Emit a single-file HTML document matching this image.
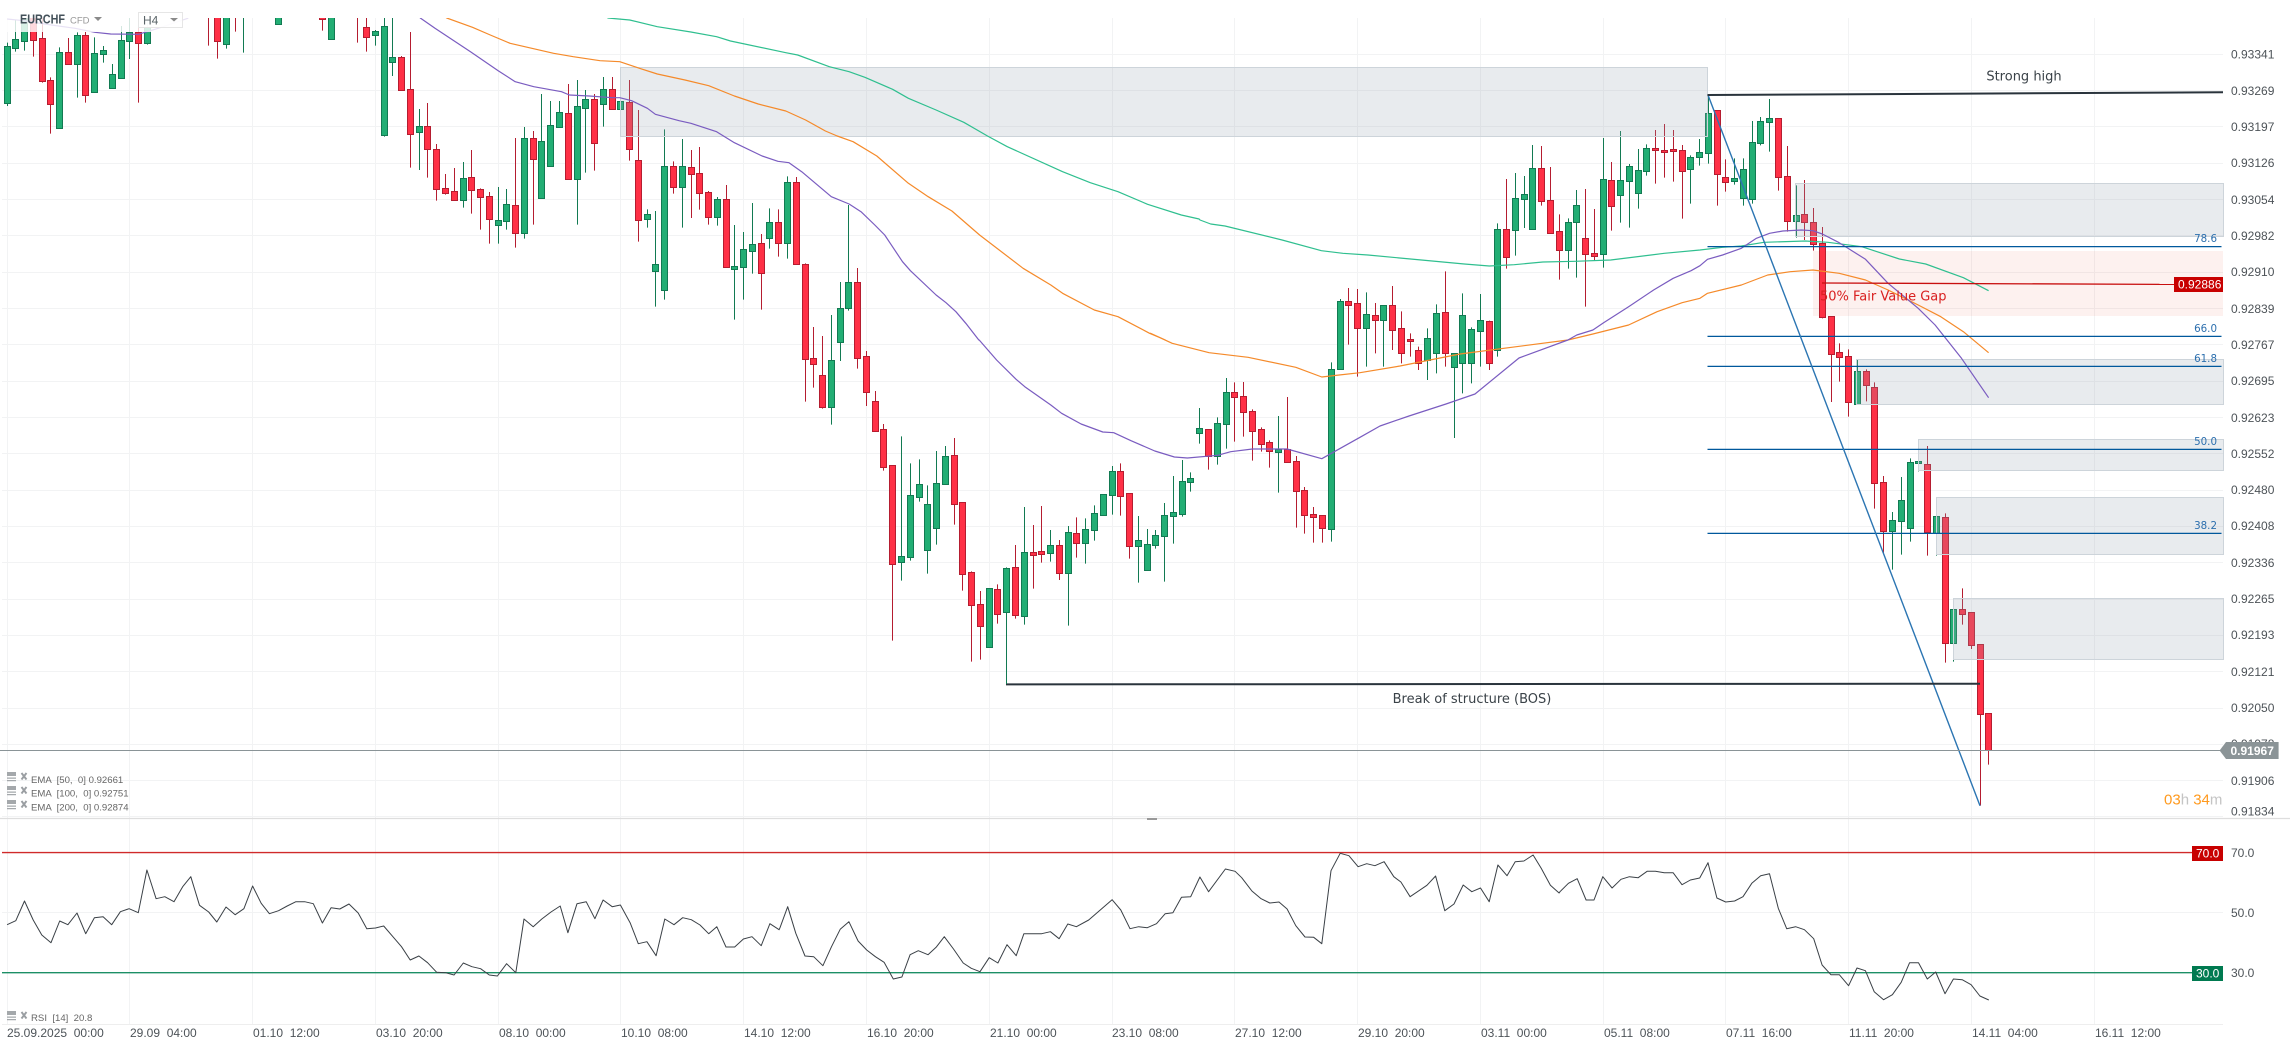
<!DOCTYPE html>
<html><head><meta charset="utf-8"><title>EURCHF</title>
<style>
html,body{margin:0;padding:0;background:#fff;width:2290px;height:1049px;overflow:hidden}
svg{display:block}
text{font-family:"Liberation Sans",sans-serif;white-space:pre}
.ax text{font-size:12px;fill:#4d5358}
.dj{font-family:"DejaVu Sans",sans-serif}
.lg text{font-size:9.6px;fill:#666}
</style></head><body>
<svg xmlns="http://www.w3.org/2000/svg" width="2290" height="1049" viewBox="0 0 2290 1049">
<defs>
<clipPath id="cp"><rect x="0" y="18" width="2223" height="800"/></clipPath>
<g id="ic"><path d="M7 0h9v4H7zM7 5.5h9v1.2H7zM7 8h9v1.2H7z" fill="#a4a8ab"/><path d="M21.5 1l5 6.5M26.5 1l-5 6.5" stroke="#9a9ea2" stroke-width="1.9" fill="none"/></g>
</defs>
<!-- grid -->
<path fill="none" stroke="#f2f3f4" stroke-width="1" d="M7.5 18V1024M129.5 18V1024M252.5 18V1024M375.5 18V1024M498.5 18V1024M620.5 18V1024M743.5 18V1024M866.5 18V1024M989.5 18V1024M1112.5 18V1024M1234.5 18V1024M1357.5 18V1024M1480.5 18V1024M1603.5 18V1024M1725.5 18V1024M1848.5 18V1024M1971.5 18V1024M2094.5 18V1024
M2 54.5H2223M2 90.5H2223M2 126.5H2223M2 163.5H2223M2 199.5H2223M2 235.5H2223M2 272.5H2223M2 308.5H2223M2 344.5H2223M2 381.5H2223M2 417.5H2223M2 453.5H2223M2 490.5H2223M2 526.5H2223M2 562.5H2223M2 599.5H2223M2 635.5H2223M2 671.5H2223M2 708.5H2223M2 744.5H2223M2 780.5H2223M2 816.5H2223M2 912.5H2223"/>
<g id="c" clip-path="url(#cp)"></g>
<!-- zones -->
<g fill="#96a4b1" fill-opacity=".22" stroke="#cdd4da" stroke-width="1">
<rect x="620.5" y="67.5" width="1087" height="69"/>
<rect x="1795.5" y="183.5" width="428" height="53"/>
<rect x="1856.5" y="359.5" width="367" height="45"/>
<rect x="1918.5" y="439.5" width="305" height="31"/>
<rect x="1936.5" y="497.5" width="287" height="57"/>
<rect x="1953.5" y="598.5" width="270" height="61"/>
</g>
<rect x="1813" y="251" width="410" height="65" fill="#e8402a" fill-opacity=".075"/>
<g id="l" clip-path="url(#cp)" fill="none"></g>
<!-- fib -->
<g stroke="#00589c" stroke-width="1.3" fill="none">
<path d="M1707.5 246.6H2221.5M1707.5 336.4H2221.5M1707.5 366.4H2221.5M1707.5 449.4H2221.5M1707.5 533.4H2221.5"/>
</g>
<path d="M1708 95L1980 805.7" stroke="#2b75b2" stroke-width="1.4" fill="none"/>
<g class="dj" font-size="10.3" fill="#2c6fae" text-anchor="end">
<text x="2217" y="242" class="dj">78.6</text>
<text x="2217" y="332" class="dj">66.0</text>
<text x="2217" y="362" class="dj">61.8</text>
<text x="2217" y="445" class="dj">50.0</text>
<text x="2217" y="529" class="dj">38.2</text>
</g>
<!-- structure lines -->
<path d="M1707.5 95L2223 92.3" stroke="#2a343c" stroke-width="2" fill="none"/>
<path d="M1006 684.4L1980 683.7" stroke="#2a343c" stroke-width="2" fill="none"/>
<path d="M1006.5 640V684" stroke="#127a52" stroke-width="1" fill="none"/>
<text x="2024" y="80.5" class="dj" font-size="13" fill="#3a4248" text-anchor="middle">Strong high</text>
<text x="1472" y="703" class="dj" font-size="13" fill="#3a4248" text-anchor="middle">Break of structure (BOS)</text>
<path d="M1822 283L2174 284.4" stroke="#c80f0f" stroke-width="1.3" fill="none"/>
<text x="1820" y="300.5" class="dj" font-size="13" fill="#d92020">50% Fair Value Gap</text>
<rect x="2174" y="277" width="49" height="15" fill="#c80000"/>
<text x="2178" y="288.5" font-size="12" fill="#fff">0.92886</text>
<!-- current price -->
<path d="M0 750.5H2220" stroke="#8a9497" stroke-width="1" fill="none"/>
<g class="ax">
<text x="2231" y="58.5">0.93341</text>
<text x="2231" y="95">0.93269</text>
<text x="2231" y="131">0.93197</text>
<text x="2231" y="167">0.93126</text>
<text x="2231" y="204">0.93054</text>
<text x="2231" y="240">0.92982</text>
<text x="2231" y="276">0.92910</text>
<text x="2231" y="313">0.92839</text>
<text x="2231" y="349">0.92767</text>
<text x="2231" y="385">0.92695</text>
<text x="2231" y="422">0.92623</text>
<text x="2231" y="458">0.92552</text>
<text x="2231" y="494">0.92480</text>
<text x="2231" y="530">0.92408</text>
<text x="2231" y="567">0.92336</text>
<text x="2231" y="603">0.92265</text>
<text x="2231" y="639">0.92193</text>
<text x="2231" y="676">0.92121</text>
<text x="2231" y="712">0.92050</text>
<text x="2231" y="748">0.91978</text>
<text x="2231" y="785">0.91906</text>
<text x="2231" y="815.5">0.91834</text>
</g>
<path d="M2219.6 750.5L2226 742H2278.6V759H2226Z" fill="#8b9497"/>
<text x="2230.5" y="755" font-size="12" fill="#fff" font-weight="bold">0.91967</text>
<text x="2164" y="804.5" font-size="15" fill="#ff9a1f">03<tspan fill="#c4c4c4">h</tspan> 34<tspan fill="#c4c4c4">m</tspan></text>
<!-- separator -->
<path d="M0 818.5H2290" stroke="#dedede" stroke-width="1.2" fill="none"/>
<rect x="1147" y="818" width="10" height="2" fill="#999"/>
<!-- RSI -->
<path d="M2 852.6H2192" stroke="#d02a2a" stroke-width="1.4" fill="none"/>
<path d="M2 972.7H2192" stroke="#1d8f66" stroke-width="1.4" fill="none"/>
<g id="r" fill="none"></g>
<rect x="2192" y="846" width="31" height="15" fill="#c80000"/>
<text x="2196" y="857.5" font-size="12" fill="#fff">70.0</text>
<rect x="2192" y="966" width="31" height="15" fill="#007a50"/>
<text x="2196" y="977.5" font-size="12" fill="#fff">30.0</text>
<g class="ax">
<text x="2231" y="857">70.0</text>
<text x="2231" y="917">50.0</text>
<text x="2231" y="977">30.0</text>
</g>
<path d="M2 1024.5H2223" stroke="#eeeeee" stroke-width="1" fill="none"/>
<g class="ax">
<text x="7" y="1037">25.09.2025  00:00</text>
<text x="130" y="1037">29.09  04:00</text>
<text x="253" y="1037">01.10  12:00</text>
<text x="376" y="1037">03.10  20:00</text>
<text x="499" y="1037">08.10  00:00</text>
<text x="621" y="1037">10.10  08:00</text>
<text x="744" y="1037">14.10  12:00</text>
<text x="867" y="1037">16.10  20:00</text>
<text x="990" y="1037">21.10  00:00</text>
<text x="1112" y="1037">23.10  08:00</text>
<text x="1235" y="1037">27.10  12:00</text>
<text x="1358" y="1037">29.10  20:00</text>
<text x="1481" y="1037">03.11  00:00</text>
<text x="1604" y="1037">05.11  08:00</text>
<text x="1726" y="1037">07.11  16:00</text>
<text x="1849" y="1037">11.11  20:00</text>
<text x="1972" y="1037">14.11  04:00</text>
<text x="2095" y="1037">16.11  12:00</text>
</g>
<!-- legends -->
<g class="lg">
<use href="#ic" y="772"/><text x="31" y="783">EMA  [50,  0] 0.92661</text>
<use href="#ic" y="786"/><text x="31" y="796.5">EMA  [100,  0] 0.92751</text>
<use href="#ic" y="800"/><text x="31" y="810.5">EMA  [200,  0] 0.92874</text>
<use href="#ic" y="1011"/><text x="31" y="1021">RSI  [14]  20.8</text>
</g>
<!-- header -->
<rect x="0" y="18" width="190" height="14" fill="#fff" fill-opacity=".82"/>
<text x="20" y="23.5" font-size="13" font-weight="bold" fill="#435059" textLength="45" lengthAdjust="spacingAndGlyphs">EURCHF</text>
<text x="70" y="23.5" font-size="9.5" fill="#9a9a9a">CFD</text>
<path d="M94 17H102L98 21Z" fill="#8a8a8a"/>
<rect x="138.5" y="12.5" width="44" height="15" fill="#fff" fill-opacity=".85" stroke="#e6e6e6"/>
<text x="143" y="24.5" font-size="12" fill="#5a6468">H4</text>
<path d="M170 18H178L174 21.5Z" fill="#8a8a8a"/>
<script>
(function(){
var NS="http://www.w3.org/2000/svg",cG=document.getElementById("c"),lG=document.getElementById("l"),rG=document.getElementById("r");
function el(p,n,a){var e=document.createElementNS(NS,n);for(var k in a)e.setAttribute(k,a[k]);p.appendChild(e);return e}
var C=[
[0,0,2.529,"g18 128 139 308 318,g39 60 118 143 155,g62 40 40 124 152,r84 40 40 119 170,r107 40 115 243 248,r128 232 241 313 401,g150 142 157 385 385,r173 114 157 193 193,g196 97 106 193 293,r216 96 106 286 308,g239 112 160 277 277,g262 138 151 163 188,g285 192 223 265 266,g307 78 121 235 236,g328 40 96 124 177,r350 40 96 130 308,g373 40 82 130 134,r527 40 40 40 137,r550 40 40 124 176,g572 40 40 133 146,r595 40 40 40 95,g616 40 40 40 158,g704 40 40 73 73,r815 40 40 58 92,g838 40 40 116 116,r904 40 40 40 128,r927 40 82 110 155,g950 90 94 106 137,g972 40 79 406 410,g992 40 172 187 228,r1015 168 172 269 272,r1038 96 268 403 503,g1060 327 379 397 510,r1081 309 379 448 533,r1104 432 448 566 602,r1127 522 565 578 584,r1149 504 574 599 599,g1171 486 535 599 623,r1192 450 532 571 641,r1215 565 568 592 689,r1238 576 589 658 731,g1260 561 661 674 731,g1281 567 613 664 689,r1304 414 616 700 743,g1326 381 415 700 716,r1349 393 415 478 674,g1369 282 424 593 593,g1392 303 376 499 499,g1415 303 337 380 383,r1438 252 340 536 539,g1460 240 319 536 674,g1481 270 298 325 518,r1503 282 298 430 512,g1526 231 268 313 380,r1549 231 268 328 328"],
[600,0,2.529,"g52 304 304 328 328,r74 240 307 448 482,r97 330 481 661 725,g120 628 643 658 683,g141 633 793 814 920,g163 388 499 871 899,r186 484 499 562 581,g208 417 499 562 683,r231 450 502 523 654,r251 441 520 580 629,r274 573 577 652 674,g297 591 598 652 677,r319 555 598 802 802,g340 675 799 806 959,g363 696 748 802 899,g385 609 733 754 821,r408 702 730 820 929,g429 625 667 715 746,r451 628 667 730 770,g474 529 547 730 776,r497 531 547 793 793,g629 615 847 925 932"],
[680,320,2.306,"r289 -170 -167 118 245,r308 21 115 131 203,r328 48 166 260 266,g349 -15 121 260 314,g369 -114 -35 65 123,r409 -156 -113 113 146,r430 93 109 215 258,r451 213 244 332 335,r469 312 328 442 452,r490 436 436 733 962,g511 349 709 727 782,g531 430 526 712 722,g552 418 493 532 545,g571 496 553 691 761,g591 393 490 625 674,g612 378 409 493 493,r633 354 406 553 614,r651 547 547 763 812,r672 754 757 856 1025,r693 813 853 919 1019,g713 805 805 982 982,r732 793 808 883 911,g753 742 745 877 1092,r773 675 742 886 896,g794 561 697 889 914,r815 615 697 704 806,r833 558 694 703 728,g854 630 676 700 725,r875 660 676 760 780,g896 618 637 760 917,r914 592 640 670 713,g935 595 628 670 731,g956 556 580 631 662,g976 523 523 584 588,g997 438 454 526 584,r1016 430 454 529 587,r1037 520 520 679 716,g1057 588 661 679 788,g1078 627 673 751 752,g1097 630 646 676 686,g1117 549 586 649 785,g1138 468 577 589 671,g1159 420 484 583 590,g1177 457 475 487 515,g1198 264 325 340 371,r1219 328 328 409 449,g1239 292 310 408 434,g1260 174 217 313 386,r1278 187 217 232 365,r1299 186 229 277 350,r1320 268 274 334 422,r1341 322 328 373 395,r1359 361 367 394 443,g1380 288 388 397 518,r1401 231 388 427 427,r1422 408 424 514 623,r1440 501 511 586 641,r1461 561 583 590 668,r1481 586 586 625 668,g1502 127 146 628 665"],
[1200,0,2.8,"g393 897 904 1108 1108,r415 864 904 916 1034,r441 867 910 985 1130,g466 877 943 985 1100,r491 909 946 961 1060,g514 916 916 961 1100,r539 858 916 991 1050,r564 934 985 1060 1090,r589 1000 1018 1022 1070,r612 1040 1050 1090 1110,g637 985 1015 1080 1140,g662 913 940 1060 1120,r687 814 937 1060 1100,g712 1060 1060 1100 1314,g735 880 946 1090 1180,g760 982 988 1090 1150,g785 882 961 994 1100,r810 962 964 1090 1110,g833 670 688 1050 1070,r858 537 688 770 806,g884 519 595 691 767,g908 528 583 598 684,g931 435 505 686 686,r956 438 505 604 617,r981 501 601 700 700,r1006 643 694 751 839,g1032 655 667 751 806,g1054 570 616 667 833,r1080 567 715 763 920,r1104 627 760 767 782,g1129 414 538 763 803,r1152 486 541 619 692,g1177 393 541 586 668,g1202 492 499 544 683,g1227 447 511 580 626,g1250 433 445 514 527,r1275 390 445 451 551,r1300 372 451 457 533,r1325 390 448 454 545,r1351 435 451 514 656,g1373 466 472 508 611,g1398 417 457 472 497,g1423 283 340 460 491,r1449 330 331 523 617,r1471 478 532 547 575,g1496 475 535 544 554,g1521 475 508 595 617,g1547 363 427 598 611"],
[1700,60,2.658,"g160 171 184 250 256,g184 117 175 187 275,r208 175 175 352 392,r232 258 349 484 515,g256 376 466 484 533,r277 360 463 487 540,r301 444 487 553 572,r325 501 550 772 775,r349 769 769 883 1026,r370 850 877 892 965,r394 868 889 1027 1070,g418 900 934 1033 1033,r442 928 934 976 1024,r463 967 982 1270 1346"],
[1700,440,2.658,"r487 108 127 272 343,g511 216 241 272 389,g535 111 181 244 344,g559 55 67 265 305,g580 64 64 70 94,r604 18 73 277 347,g628 172 229 278 347,r652 220 232 610 668,g673 508 508 610 665,r697 445 508 523 554,r721 517 517 616 627,r745 613 613 823 1097,r766 820 820 930 974"]
];
var col={g:["#22ae74","#127a52"],r:["#ff3046","#b51d30"]};
C.forEach(function(s){s[3].split(",").forEach(function(t){
 var c=t[0],v=t.slice(1).split(" ").map(Number);
 var X=Math.floor(s[0]+v[0]/s[2])+.5,f=function(y){return s[1]+y/3};
 var wt=f(v[1]),bt=f(v[2]),bb=f(v[3]),wb=f(v[4]);
 el(cG,"line",{x1:X,x2:X,y1:wt,y2:wb,stroke:col[c][1],"stroke-width":1});
 if(bb>bt){var y=Math.round(bt)+.5,h=Math.max(1,Math.round(bb)-Math.round(bt));
 el(cG,"rect",{x:X-3,y:y,width:6,height:h,fill:col[c][0],stroke:col[c][1],"stroke-width":1});}
})});
function pts(segs){var o=[];segs.forEach(function(s){s[3].trim().split(/\s+/).forEach(function(p){var a=p.split(",");o.push((s[0]+a[0]/s[2]).toFixed(1)+","+(s[1]+a[1]/3).toFixed(1))})});return o.join(" ")}
var P=[[0,0,2.529,"18,57 60,62 130,75 190,85 240,97 280,102 350,103 400,85 475,55 480,30 1050,30 1063,54 1100,85 1190,155 1260,212 1303,245 1350,260 1420,275 1440,285 1490,288 1549,293"],
[600,0,2.529,"50,293 80,302 120,325 140,343 200,362 230,370 295,395 340,428 410,468 450,484 478,488 510,515 585,590 630,612 660,635 695,675 720,705 765,785 785,812 850,885 875,908 900,935 925,970 958,1020"],
[680,320,2.306,"690,60 730,120 775,178 795,200 855,255 880,280 925,312 975,336 1000,338 1040,362 1095,393 1140,411 1170,414 1240,406 1270,395 1320,387 1400,387 1480,416 1568,352"],
[0,0,1,"1380,1278 1409,1248 1446,1212 1475,1182 1519,1074"],
[1200,0,2.8,"1030,1020 1055,1005 1100,990 1130,968 1200,920 1270,870 1325,835 1375,812"],
[1700,60,2.658,"0,617 20,598 60,585 110,565 150,535 185,520 220,513 270,510 300,512 325,522 370,548 440,598 500,670 580,745 625,795 695,895 767,1013"]];
var O=[[0,0,2.529,"1100,30 1130,54 1195,82 1240,105 1290,130 1400,160 1450,170"],
[600,0,2.529,"0,182 50,185 100,205 145,222 215,240 275,257 340,288 400,312 470,333 520,360 570,393 600,408 640,425 700,468 780,550 830,590 890,633 960,705 1070,805 1140,855 1170,880 1250,930 1310,950 1390,1000 1430,1020"],
[680,320,2.306,"1085,40 1135,70 1220,98 1310,112 1420,142 1480,171 1520,165 1568,158"],
[0,0,1,"1400,1098 1460,1062"],
[1200,0,2.8,"1030,1020 1100,1002 1200,975 1280,935 1350,908"],
[1700,60,2.658,"0,715 20,700 110,675 180,645 240,635 300,630 370,640 440,660 500,690 580,735 640,770 700,815 767,878"]];
var G=[[600,0,2.529,"0,30 20,54 75,60 145,80 230,96 295,110 330,123 470,158 500,165 580,200 630,215 670,232 740,268 780,295 850,330 920,367 980,408 1030,440 1170,515 1240,548 1310,575 1385,613 1470,645 1515,657"],
[1200,0,2.8,"0,660 30,672 70,678 230,720 340,752 400,760 470,765 620,780 740,792 810,798 880,794 960,786 1050,784 1150,780 1300,760"],
[1700,60,2.658,"0,570 60,562 110,558 170,547 280,543 340,547 430,560 530,597 600,612 700,653 767,692"]];
el(lG,"polyline",{points:pts(G),stroke:"#2fbf8f","stroke-width":1.2,"stroke-linejoin":"round"});
el(lG,"polyline",{points:pts(O),stroke:"#f58a2a","stroke-width":1.2,"stroke-linejoin":"round"});
el(lG,"polyline",{points:pts(P),stroke:"#7a5cc0","stroke-width":1.2,"stroke-linejoin":"round"});
var R=[[0,760,1.96,"14,494 31,482 48,423 65,480 82,525 100,548 117,483 133,494 151,459 168,521 185,473 202,470 219,494 236,455 253,446 271,458 288,330 306,416 323,410 341,425 358,380 374,350 391,436 409,456 425,486 443,441 461,464 478,446 495,378 512,430 528,461 546,452 563,438 580,425 597,425 614,431 632,489 649,443 666,447 684,432 702,459 719,506 736,504 752,498 770,530 787,560 804,600 821,588 838,608 856,637 873,638 890,645 908,609 925,620 942,626 959,645 975,648 993,611 1011,638 1027,477 1045,500 1062,477 1080,456 1098,438 1113,518 1131,431 1149,425 1166,476 1182,420 1200,440 1216,435 1235,488 1251,551 1268,545 1286,587 1303,477 1321,494 1338,473 1355,479 1372,495 1389,521 1405,500 1423,561 1440,561 1457,537 1474,530 1492,557 1509,491 1527,509"],
[780,800,1.96,"0,383 15,320 31,400 49,468 66,470 84,497 101,440 118,388 135,365 153,423 170,450 187,470 204,487 222,537 239,531 255,464 271,452 290,464 306,442 322,410 340,447 359,489 375,505 392,515 410,473 427,489 445,434 463,467 478,401 513,401 530,395 547,416 564,372 581,380 605,360 651,299 668,330 686,386 703,380 720,383 738,371 755,341 770,338 787,292 805,290 823,231 840,275 873,207 892,214 905,233 925,273 943,296 960,309 978,306 994,327 1011,377 1029,411 1046,412 1062,431 1080,212 1098,160 1115,167 1133,200 1150,191 1166,197 1184,185 1203,230 1217,246 1235,290 1268,256 1285,228 1303,332 1321,312 1339,255 1356,275 1373,264 1390,305 1407,195 1425,227 1441,185 1458,183 1476,165 1492,205 1510,256 1527,279"],
[1560,800,2.148,"0,275 18,250 37,236 56,300 73,300 92,230 112,264 131,238 149,230 168,233 187,214 205,214 224,218 243,218 262,254 280,240 300,234 318,188 337,294 356,306 375,303 393,290 412,250 431,227 450,221 469,325 487,386 506,380 525,389 545,416 563,495 582,524 600,524 620,557 638,504 656,512 675,575 695,599 714,584 733,547 751,488 770,488 789,537 807,516 827,581 845,537 864,539 883,554 902,588 921,600"]];
el(rG,"polyline",{points:pts(R),stroke:"#3a4046","stroke-width":1,"stroke-linejoin":"round"});
})();
</script>
</svg>
</body></html>
